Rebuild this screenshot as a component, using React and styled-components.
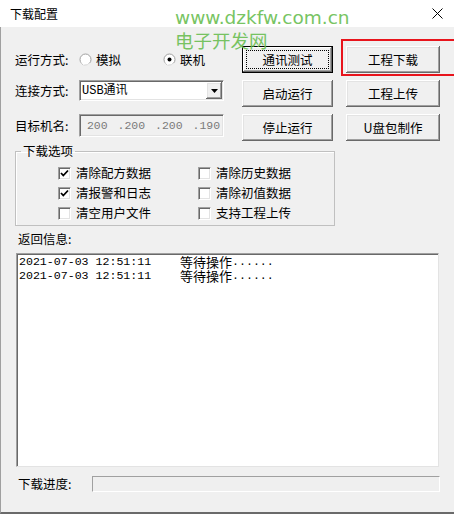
import React from 'react';
import styled, { createGlobalStyle } from 'styled-components';

const GlobalStyle = createGlobalStyle`
  html, body {
    margin: 0;
    padding: 0;
    background: #ffffff;
  }
  body {
    font-family: "Noto Sans CJK SC", "Liberation Sans", sans-serif;
    font-size: 12.5px;
    color: #000;
  }
`;

const Window = styled.div`
  position: relative;
  width: 454px;
  height: 514px;
  display: flex;
  flex-direction: column;
  overflow: hidden;
`;

const TitleBar = styled.div`
  height: 27px;
  flex: none;
  background: #fff;
  display: flex;
  align-items: center;
  justify-content: space-between;
  padding: 0 11px 0 10px;
  font-size: 12px;
  line-height: 14px;
`;

const CloseIcon = styled.svg`
  width: 11px;
  height: 11px;
  display: block;
`;

const Body = styled.div`
  flex: 1;
  background: #f0f0f0;
  border-left: 1px solid #a0a0a0;
  border-bottom: 2px solid #6a6a6a;
  padding: 19px 14px 0 14px;
  display: flex;
  flex-direction: column;
`;

const Top = styled.div`
  display: flex;
  align-items: flex-start;
`;

const LeftForm = styled.div`
  display: grid;
  grid-auto-rows: 27px;
  row-gap: 7px;
  width: 210px;
`;

const FormRow = styled.div`
  display: flex;
  align-items: center;
  align-self: ${p => (p.$top ? 'start' : 'center')};
  height: ${p => p.$h}px;
`;

const Label = styled.span`
  width: 64px;
  flex: none;
  line-height: 14px;
  white-space: nowrap;
`;

const RadioItem = styled.label`
  display: flex;
  align-items: center;
  gap: 4px;
  width: ${p => p.$w}px;
  line-height: 14px;
`;

const RadioDot = styled.svg`
  width: 13px;
  height: 13px;
  display: block;
  flex: none;
`;

const Sunken = styled.div`
  box-sizing: border-box;
  width: 145px;
  height: ${p => p.$h}px;
  border: 1px solid;
  border-color: #a0a0a0 #fff #fff #a0a0a0;
  box-shadow: inset 1px 1px #696969, inset -1px -1px #e3e3e3;
  background: ${p => p.$bg || '#fff'};
  display: flex;
  align-items: center;
`;

const SelectText = styled.span`
  flex: 1;
  padding-left: 2px;
  font-family: "Liberation Mono", "Noto Sans CJK SC", monospace;
  font-size: 12px;
  line-height: 14px;
`;

const ArrowBtn = styled.span`
  width: 16px;
  height: 17px;
  margin-right: 1px;
  background: #f0f0f0;
  box-shadow: inset -1px -1px #696969, inset 1px 1px #fff, inset -2px -2px #a0a0a0, inset 2px 2px #e3e3e3;
  display: flex;
  align-items: center;
  justify-content: center;
`;

const IpSeg = styled.span`
  width: 37.5px;
  flex: none;
  font-family: "Liberation Mono", monospace;
  font-size: 11.5px;
  line-height: 14px;
  color: #7a7a7a;
  white-space: pre;
`;

const ButtonGrid = styled.div`
  margin-left: 18px;
  display: grid;
  grid-template-columns: 91px 94px;
  grid-auto-rows: 27px;
  column-gap: 13px;
  row-gap: 7px;
`;

const Button = styled.button`
  position: relative;
  border: none;
  margin: 0;
  padding: 0;
  background: #f0f0f0;
  font-family: "Noto Sans CJK SC", sans-serif;
  font-size: 12.5px;
  line-height: 14px;
  color: #000;
  box-shadow: ${p =>
    p.$default
      ? 'inset 0 0 0 1px #000, inset -2px -2px #696969, inset 2px 2px #fff, inset -3px -3px #a0a0a0'
      : 'inset -1px -1px #696969, inset 1px 1px #fff, inset -2px -2px #a0a0a0, inset 2px 2px #e3e3e3'};
`;

const FocusRect = styled.span`
  position: absolute;
  inset: 4px;
  border: 1px dotted #000;
  pointer-events: none;
`;

const Highlight = styled.span`
  position: absolute;
  left: -5px;
  top: -7px;
  right: -20px;
  bottom: -3px;
  border: 2px solid #e8141c;
  pointer-events: none;
`;

const GroupBox = styled.fieldset`
  margin: 3px 0 0 0;
  width: 320px;
  box-sizing: border-box;
  border: 1px solid #c0c0c0;
  box-shadow: inset 1px 1px #fff;
  padding: 0;
  min-width: 0;
`;

const Legend = styled.legend`
  margin-left: 5px;
  padding: 0 2px;
  line-height: 14px;
`;

const CheckGrid = styled.div`
  display: grid;
  grid-template-columns: 140px 140px;
  grid-auto-rows: 20px;
  padding: 5px 0 2px 42px;
`;

const CheckItem = styled.label`
  display: flex;
  align-items: center;
  gap: 5px;
  line-height: 14px;
`;

const Box = styled.span`
  box-sizing: border-box;
  width: 13px;
  height: 13px;
  flex: none;
  border: 1px solid;
  border-color: #a0a0a0 #fff #fff #a0a0a0;
  box-shadow: inset 1px 1px #696969, inset -1px -1px #e3e3e3;
  background: #fff;
  display: flex;
  align-items: center;
  justify-content: center;
`;

const SectionLabel = styled.div`
  margin: 6px 0 0 3px;
  line-height: 14px;
`;

const LogArea = styled.div`
  box-sizing: border-box;
  margin: 7px 0 0 1px;
  width: 423px;
  height: 214px;
  background: #fff;
  border: 1px solid;
  border-color: #a0a0a0 #e3e3e3 #e3e3e3 #a0a0a0;
  box-shadow: inset 1px 1px #696969;
  padding: 1px 0 0 2px;
  display: flex;
  flex-direction: column;
`;

const LogLine = styled.div`
  display: flex;
  height: 14px;
  align-items: center;
`;

const Mono = styled.span`
  font-family: "Liberation Mono", monospace;
  font-size: 11.6px;
  line-height: 14px;
  width: ${p => (p.$w ? `${p.$w}px` : 'auto')};
  flex: none;
  white-space: pre;
`;

const Cjk = styled.span`
  font-size: 13px;
  line-height: 14px;
`;

const ProgressRow = styled.div`
  display: flex;
  align-items: center;
  margin-top: 9px;
  padding-left: 3px;
`;

const ProgressLabel = styled.span`
  width: 74px;
  flex: none;
  line-height: 14px;
`;

const ProgressBar = styled.div`
  box-sizing: border-box;
  width: 348px;
  height: 16px;
  border: 1px solid;
  border-color: #a0a0a0 #fff #fff #a0a0a0;
  background: #efefef;
`;

const Watermark = styled.div`
  position: absolute;
  left: 175px;
  top: 7px;
  color: #6dbf55;
  pointer-events: none;
  opacity: 0.92;
`;

const WmUrl = styled.div`
  font-family: "DejaVu Sans", "Liberation Sans", sans-serif;
  font-size: 18.5px;
  line-height: 22px;
`;

const WmName = styled.div`
  font-family: "Noto Sans CJK SC", sans-serif;
  font-size: 18.5px;
  line-height: 22px;
`;

const Radio = ({ checked, label, w }) => (
  <RadioItem $w={w}>
    <RadioDot viewBox="0 0 13 13">
      <circle cx="6.5" cy="6.5" r="5.5" fill="#fff" stroke="#a0a0a0" />
      <path d="M2.5 9.5 A5 5 0 0 0 10.5 10.5" stroke="#fff" fill="none" />
      {checked && <circle cx="6.5" cy="6.5" r="2" fill="#000" />}
    </RadioDot>
    {label}
  </RadioItem>
);

const Check = ({ checked, label }) => (
  <CheckItem>
    <Box>
      {checked && (
        <svg width="9" height="9" viewBox="0 0 9 9">
          <path d="M1 4 L3.3 6.5 L8 1.5" stroke="#000" strokeWidth="1.8" fill="none" />
        </svg>
      )}
    </Box>
    {label}
  </CheckItem>
);

const logs = [
  { time: '2021-07-03 12:51:11', msg: '等待操作' },
  { time: '2021-07-03 12:51:11', msg: '等待操作' }
];

const App = () => {
  return (
    <>
      <GlobalStyle />
      <Window>
        <TitleBar>
          <span>下载配置</span>
          <CloseIcon viewBox="0 0 11 11">
            <path d="M0.5 0.5 L10.5 10.5 M10.5 0.5 L0.5 10.5" stroke="#000" strokeWidth="1" />
          </CloseIcon>
        </TitleBar>
        <Body>
          <Top>
            <LeftForm>
              <FormRow $h={27}>
                <Label>运行方式:</Label>
                <Radio label="模拟" w={84} />
                <Radio checked label="联机" />
              </FormRow>
              <FormRow $top $h={21}>
                <Label>连接方式:</Label>
                <Sunken $h={21}>
                  <SelectText>USB通讯</SelectText>
                  <ArrowBtn>
                    <svg width="7" height="4" viewBox="0 0 7 4">
                      <path d="M0 0 H7 L3.5 4 Z" fill="#000" />
                    </svg>
                  </ArrowBtn>
                </Sunken>
              </FormRow>
              <FormRow $top $h={23}>
                <Label>目标机名:</Label>
                <Sunken $h={23} $bg="#f0f0f0">
                  <IpSeg> 200</IpSeg>
                  <IpSeg>.200</IpSeg>
                  <IpSeg>.200</IpSeg>
                  <IpSeg>.190</IpSeg>
                </Sunken>
              </FormRow>
            </LeftForm>
            <ButtonGrid>
              <Button $default>
                通讯测试
                <FocusRect />
              </Button>
              <Button>
                工程下载
                <Highlight />
              </Button>
              <Button>启动运行</Button>
              <Button>工程上传</Button>
              <Button>停止运行</Button>
              <Button>U盘包制作</Button>
            </ButtonGrid>
          </Top>

          <GroupBox>
            <Legend>下载选项</Legend>
            <CheckGrid>
              <Check checked label="清除配方数据" />
              <Check label="清除历史数据" />
              <Check checked label="清报警和日志" />
              <Check label="清除初值数据" />
              <Check label="清空用户文件" />
              <Check label="支持工程上传" />
            </CheckGrid>
          </GroupBox>

          <SectionLabel>返回信息:</SectionLabel>
          <LogArea>
            {logs.map((l, i) => (
              <LogLine key={i}>
                <Mono $w={161}>{l.time}</Mono>
                <Cjk>{l.msg}</Cjk>
                <Mono>......</Mono>
              </LogLine>
            ))}
          </LogArea>

          <ProgressRow>
            <ProgressLabel>下载进度:</ProgressLabel>
            <ProgressBar />
          </ProgressRow>
        </Body>
        <Watermark>
          <WmUrl>www.dzkfw.com.cn</WmUrl>
          <WmName>电子开发网</WmName>
        </Watermark>
      </Window>
    </>
  );
};

export default App;
